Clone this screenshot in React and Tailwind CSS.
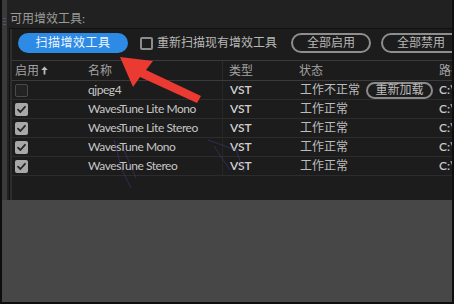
import React from "react";

function Box({ checked, light }) {
  if (checked) {
    return (
      <div className="w-[13px] h-[13px] rounded-[2px] bg-[#a8a8a8] flex items-center justify-center shrink-0">
        <svg width="11" height="11" viewBox="0 0 11 11">
          <path d="M2 5.6 L4.4 8 L9 2.8" fill="none" stroke="#262626" strokeWidth="1.8" strokeLinecap="round" strokeLinejoin="round" />
        </svg>
      </div>
    );
  }
  return (
    <div
      className={
        light
          ? "w-[13px] h-[13px] rounded-[2px] border-2 border-[#8c8c8c] bg-[#1c1c1c] shrink-0"
          : "w-[13px] h-[13px] rounded-[2px] border border-[#4a4a4a] bg-[#232323] shrink-0"
      }
    />
  );
}

const rows = [
  { checked: false, name: "qjpeg4", status: "工作不正常", reload: true },
  { checked: true, name: "WavesTune Lite Mono", status: "工作正常" },
  { checked: true, name: "WavesTune Lite Stereo", status: "工作正常" },
  { checked: true, name: "WavesTune Mono", status: "工作正常" },
  { checked: true, name: "WavesTune Stereo", status: "工作正常" },
];

export default function App() {
  return (
    <div className="relative w-[454px] h-[304px] bg-[#0e0e0e] flex flex-col px-[2px] pb-[2px] overflow-hidden font-['Lato','Noto_Sans_CJK_SC',sans-serif] text-[12px] leading-[14px]">
      <div className="h-[200px] flex shrink-0">
        <div className="w-[5px] bg-[#3a3a3a] flex flex-col items-center pt-[18px] gap-[2px]">
          <div className="w-[3px] h-[1px] bg-[#555]" />
          <div className="w-[3px] h-[1px] bg-[#555]" />
          <div className="w-[3px] h-[1px] bg-[#555]" />
        </div>
        <div className="flex-1 bg-[#212121] flex flex-col min-w-0">
          <div className="h-[28px] pl-[3px] pt-[12px] text-[#9a9a9a]">可用增效工具:</div>
          <div className="flex-1 ml-[2px] border-t border-l border-[#101010] bg-[#1c1c1c] flex min-h-0 overflow-hidden">
            <div className="w-[2px] bg-[#2e2e2e] shrink-0" />
            <div className="flex-1 flex flex-col min-w-0">
              {/* toolbar */}
              <div className="h-[32px] border-b border-[#3a3a3a] flex items-start pt-[4px] pl-[6px] shrink-0 whitespace-nowrap">
                <div className="flex items-center h-[20px]">
                  <div className="w-[110px] h-[20px] rounded-full bg-[#2d8be6] text-[#eef5ff] flex items-center justify-center shrink-0 tracking-[0.5px]">
                    扫描增效工具
                  </div>
                  <div className="ml-[12px]">
                    <Box light />
                  </div>
                  <span className="ml-[4px] text-[#b8b8b8]">重新扫描现有增效工具</span>
                  <div className="ml-[14px] w-[80px] h-[20px] rounded-full border-2 border-[#8e8e8e] text-[#b8b8b8] flex items-center justify-center shrink-0">
                    全部启用
                  </div>
                  <div className="ml-[10px] w-[80px] h-[20px] rounded-full border-2 border-[#8e8e8e] text-[#b8b8b8] flex items-center justify-center shrink-0">
                    全部禁用
                  </div>
                </div>
              </div>
              {/* header */}
              <div className="h-[20px] border-b border-[#3a3a3a] flex items-center shrink-0 text-[#a2a2a2] whitespace-nowrap">
                <div className="w-[70px] pl-[3px] flex items-center shrink-0">
                  <span>启用</span>
                  <svg className="ml-[2px]" width="7" height="9" viewBox="0 0 7 9">
                    <path d="M3.5 0.5 L6.8 4 L4.4 4 L4.4 8.5 L2.6 8.5 L2.6 4 L0.2 4 Z" fill="#bdbdbd" />
                  </svg>
                </div>
                <div className="w-[140px] pl-[6px] shrink-0">名称</div>
                <div className="w-[72px] h-full pl-[6px] border-l border-[#2a2a2a] flex items-center shrink-0">类型</div>
                <div className="w-[140px] pl-[5px] shrink-0">状态</div>
                <div className="flex-1 pl-[5px] overflow-hidden">路径</div>
              </div>
              {rows.map((r) => (
                <div key={r.name} className="h-[19px] border-b border-[#2c2c2c] flex items-center shrink-0 whitespace-nowrap">
                  <div className="w-[70px] pl-[3px] shrink-0">
                    <Box checked={r.checked} />
                  </div>
                  <div className="w-[140px] pl-[6px] shrink-0 text-[#c6c6c6] tracking-[-0.45px]">{r.name}</div>
                  <div className="w-[72px] h-full pl-[7px] border-l border-[#262626] flex items-center shrink-0 text-[#d0d0d0] font-semibold">VST</div>
                  <div className="w-[140px] pl-[6px] shrink-0 flex items-center text-[#bdbdbd]">
                    <span>{r.status}</span>
                    {r.reload && (
                      <div className="ml-[6px] w-[67px] h-[17px] rounded-full border-2 border-[#8a8a8a] text-[#bdbdbd] flex items-center justify-center">
                        重新加载
                      </div>
                    )}
                  </div>
                  <div className="flex-1 pl-[5px] overflow-hidden text-[#c8c8c8] font-semibold">C:\Program</div>
                </div>
              ))}
            </div>
          </div>
        </div>
      </div>
      <div className="flex-1 bg-[#474747]" />

      <svg className="absolute left-0 top-0 pointer-events-none" width="454" height="304" viewBox="0 0 454 304">
        <g stroke="#5b3fa8" strokeWidth="1" fill="none" opacity="0.4">
          <path d="M114 140 L122 170 L131 188" />
          <path d="M124 150 L136 178" />
          <path d="M208 140 L236 150 L244 172" />
          <path d="M214 146 L230 170" />
        </g>
        <polygon
          points="120,57 153,61 146,70 201,96 197,103 140,77 133,87"
          fill="#ea3a32"
        />
      </svg>
    </div>
  );
}
